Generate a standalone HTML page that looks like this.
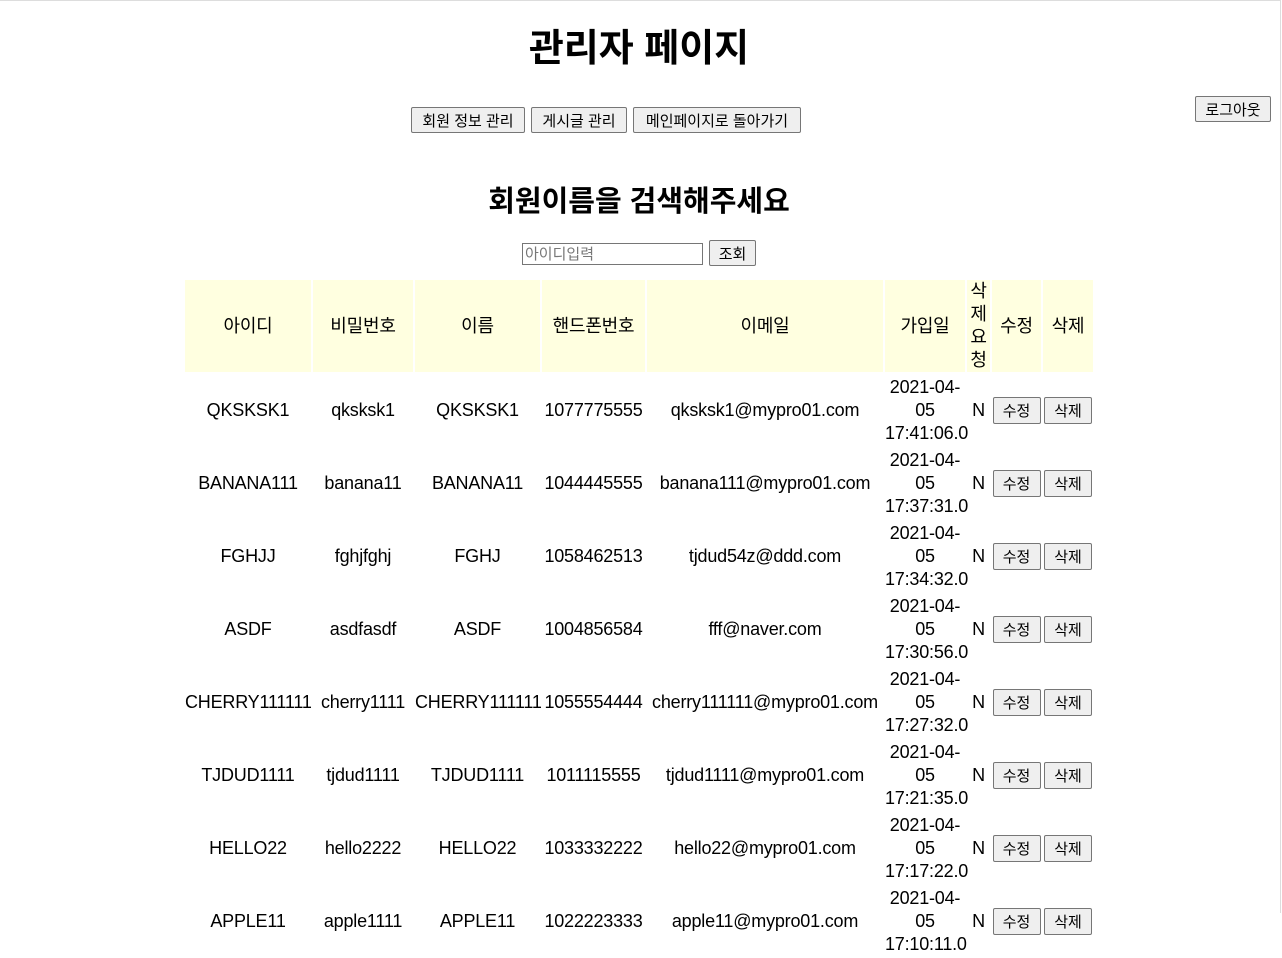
<!DOCTYPE html>
<html><head><meta charset="utf-8"><style>
body{margin:0;width:1282px;height:914px;overflow:hidden;background:#fff;font-family:"Liberation Sans","Noto Sans CJK KR",sans-serif;position:relative;}
.frame{position:absolute;left:0;top:0;width:1280px;height:912px;border-top:1px solid #ddd;border-right:1px solid #ddd;}
h1{position:absolute;left:0;width:1278px;top:27px;margin:0;text-align:center;font-size:38px;line-height:44px;font-weight:bold;}
h2{position:absolute;left:0;width:1278px;top:183px;margin:0;text-align:center;font-size:29px;line-height:38px;font-weight:bold;}
button{font-family:"Liberation Sans","Noto Sans CJK KR",sans-serif;font-size:15px;background:#efefef;border:1px solid #767676;border-radius:2px;padding:0;height:26px;position:absolute;color:#000;text-align:center;}
table{position:absolute;left:183px;top:278px;border-spacing:2px;table-layout:fixed;width:912px;font-size:18px;letter-spacing:-0.2px;}
td,th{text-align:center;padding:0;line-height:23px;font-weight:normal;}
th{background:#ffffe0;height:92px;}
td{height:69px;padding-top:2px;}
td button{position:static;height:27px;width:48px;font-size:15px;letter-spacing:0;}
input{position:absolute;left:522px;top:243px;width:175px;height:18px;border:1px solid #767676;padding:1px 2px;font-size:15px;font-family:"Liberation Sans","Noto Sans CJK KR",sans-serif;}
input::placeholder{color:#777;}
</style></head><body>
<div class="frame"></div>
<h1>관리자 페이지</h1>
<button style="left:411px;top:107px;width:114px;">회원 정보 관리</button>
<button style="left:531px;top:107px;width:96px;">게시글 관리</button>
<button style="left:633px;top:107px;width:168px;">메인페이지로 돌아가기</button>
<button style="left:1195px;top:96px;width:76px;">로그아웃</button>
<h2>회원이름을 검색해주세요</h2>
<input placeholder="아이디입력">
<button style="left:709px;top:240px;width:47px;">조회</button>
<table>
<colgroup><col style="width:126px"><col style="width:100px"><col style="width:125px"><col style="width:103px"><col style="width:236px"><col style="width:80px"><col style="width:23px"><col style="width:49px"><col style="width:50px"></colgroup>
<tr><th>아이디</th><th>비밀번호</th><th>이름</th><th>핸드폰번호</th><th>이메일</th><th>가입일</th><th>삭제요청</th><th>수정</th><th>삭제</th></tr>
<tr><td>QKSKSK1</td><td>qksksk1</td><td>QKSKSK1</td><td>1077775555</td><td>qksksk1@mypro01.com</td><td>2021-04-05 17:41:06.0</td><td>N</td><td><button>수정</button></td><td><button>삭제</button></td></tr>
<tr><td>BANANA111</td><td>banana11</td><td>BANANA11</td><td>1044445555</td><td>banana111@mypro01.com</td><td>2021-04-05 17:37:31.0</td><td>N</td><td><button>수정</button></td><td><button>삭제</button></td></tr>
<tr><td>FGHJJ</td><td>fghjfghj</td><td>FGHJ</td><td>1058462513</td><td>tjdud54z@ddd.com</td><td>2021-04-05 17:34:32.0</td><td>N</td><td><button>수정</button></td><td><button>삭제</button></td></tr>
<tr><td>ASDF</td><td>asdfasdf</td><td>ASDF</td><td>1004856584</td><td>fff@naver.com</td><td>2021-04-05 17:30:56.0</td><td>N</td><td><button>수정</button></td><td><button>삭제</button></td></tr>
<tr><td>CHERRY111111</td><td>cherry1111</td><td>CHERRY111111</td><td>1055554444</td><td>cherry111111@mypro01.com</td><td>2021-04-05 17:27:32.0</td><td>N</td><td><button>수정</button></td><td><button>삭제</button></td></tr>
<tr><td>TJDUD1111</td><td>tjdud1111</td><td>TJDUD1111</td><td>1011115555</td><td>tjdud1111@mypro01.com</td><td>2021-04-05 17:21:35.0</td><td>N</td><td><button>수정</button></td><td><button>삭제</button></td></tr>
<tr><td>HELLO22</td><td>hello2222</td><td>HELLO22</td><td>1033332222</td><td>hello22@mypro01.com</td><td>2021-04-05 17:17:22.0</td><td>N</td><td><button>수정</button></td><td><button>삭제</button></td></tr>
<tr><td>APPLE11</td><td>apple1111</td><td>APPLE11</td><td>1022223333</td><td>apple11@mypro01.com</td><td>2021-04-05 17:10:11.0</td><td>N</td><td><button>수정</button></td><td><button>삭제</button></td></tr>
</table>
</body></html>
